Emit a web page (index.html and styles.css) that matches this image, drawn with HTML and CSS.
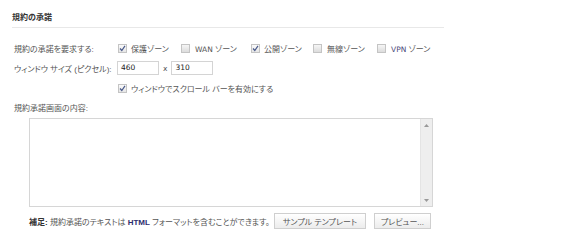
FILE: index.html
```html
<!DOCTYPE html>
<html lang="ja">
<head>
<meta charset="utf-8">
<link rel="stylesheet" href="styles.css">
</head>
<body>
<div class="section">
  <div class="title">規約の承諾</div>
  <div class="row r1">
    <div class="label">規約の承諾を要求する:</div>
    <div class="checks">
      <span class="item i1"><span class="cb on"><svg viewBox="0 0 9 9" width="9" height="9"><path d="M2 4.5 L3.8 6.5 L7 1.8" fill="none" stroke="#4a5a8a" stroke-width="1.2"/></svg></span><span class="txt">保護ゾーン</span></span>
      <span class="item i2"><span class="cb"></span><span class="txt"><span class="lat">WAN</span> ゾーン</span></span>
      <span class="item i3"><span class="cb on"><svg viewBox="0 0 9 9" width="9" height="9"><path d="M2 4.5 L3.8 6.5 L7 1.8" fill="none" stroke="#4a5a8a" stroke-width="1.2"/></svg></span><span class="txt">公開ゾーン</span></span>
      <span class="item i4"><span class="cb"></span><span class="txt">無線ゾーン</span></span>
      <span class="item i5"><span class="cb"></span><span class="txt"><span class="lat vpn">VPN</span> ゾーン</span></span>
    </div>
  </div>
  <div class="row r2">
    <div class="label">ウィンドウ サイズ (ピクセル):</div>
    <div class="size">
      <span class="inp lat">460</span>
      <span class="x lat">x</span>
      <span class="inp lat">310</span>
    </div>
  </div>
  <div class="row r3">
    <div class="label"></div>
    <span class="item"><span class="cb on"><svg viewBox="0 0 9 9" width="9" height="9"><path d="M2 4.5 L3.8 6.5 L7 1.8" fill="none" stroke="#4a5a8a" stroke-width="1.2"/></svg></span><span class="txt">ウィンドウでスクロール バーを有効にする</span></span>
  </div>
  <div class="row r4">
    <div class="label">規約承諾画面の内容:</div>
  </div>
  <div class="area">
    <div class="area-body"></div>
    <div class="scroll">
      <svg class="arr" viewBox="0 0 5 3" width="5" height="3"><path d="M0 3 L2.5 0 L5 3 Z" fill="#999"/></svg>
      <svg class="arr" viewBox="0 0 5 3" width="5" height="3"><path d="M0 0 L2.5 3 L5 0 Z" fill="#999"/></svg>
    </div>
  </div>
  <div class="foot">
    <span class="note"><b>補足:</b> 規約承諾のテキストは <span class="html">HTML</span> フォーマットを含むことができます。</span>
    <span class="btn b1">サンプル テンプレート</span>
    <span class="btn b2">プレビュー...</span>
  </div>
</div>
</body>
</html>
```
FILE: styles.css
```css
html, body {
  margin: 0;
  padding: 0;
  background: #fff;
}
body {
  font-family: "Liberation Sans", "Noto Sans CJK JP", sans-serif;
  font-size: 8px;
  font-feature-settings: "palt";
  color: #555;
  width: 576px;
  height: 248px;
  overflow: hidden;
}
.lat {
  font-family: "DejaVu Sans", "Noto Sans CJK JP", sans-serif;
  font-size: 7.5px;
}
.vpn {
  color: #4a4a7a;
}
.section {
  padding: 13px 0 0 12px;
  width: 432px;
}
.title {
  font-weight: bold;
  color: #333;
  padding-bottom: 4px;
  border-bottom: 1px solid #e8e8e8;
  line-height: 10px;
}
.row {
  display: flex;
  align-items: center;
  padding-left: 2px;
}
.r1 { margin-top: 14px; height: 12px; }
.r2 { margin-top: 7px; height: 14px; }
.r3 { margin-top: 7px; height: 12px; }
.r4 { margin-top: 7px; height: 12px; }
.label {
  width: 103px;
  flex: none;
  white-space: nowrap;
}
.checks {
  display: flex;
  align-items: center;
}
.item {
  display: inline-flex;
  align-items: center;
  white-space: nowrap;
  flex: none;
}
.i1 { width: 63px; }
.i2 { width: 70px; }
.i3 { width: 62px; }
.i4 { width: 64px; }
.cb {
  width: 7px;
  height: 7px;
  border: 1px solid #c4c4c4;
  background: linear-gradient(#f6f6f6, #dcdcdc);
  margin-left: 1px;
  margin-right: 4px;
  position: relative;
  flex: none;
}
.i2 .cb, .i4 .cb, .i5 .cb {
  margin-right: 5px;
}
.cb.on {
  background: linear-gradient(#fafafa, #e6e6e6);
}
.cb svg {
  position: absolute;
  left: -1px;
  top: -1px;
}
.size {
  display: flex;
  align-items: center;
}
.inp {
  width: 37px;
  height: 12px;
  border: 1px solid #d4d4d4;
  padding-left: 3px;
  line-height: 12px;
  color: #222;
}
.x {
  margin: 0 4px 0 4px;
}
.area {
  margin: 5px 0 0 17px;
  width: 402px;
  height: 87px;
  border: 1px solid #d6d6d6;
  display: flex;
}
.area-body {
  flex: 1;
}
.scroll {
  width: 11px;
  border-left: 1px solid #e4e4e4;
  background: #eeeeee;
  display: flex;
  flex-direction: column;
  justify-content: space-between;
  align-items: center;
  padding: 5px 0 4px;
}
.foot {
  display: flex;
  align-items: center;
  margin: 6px 0 0 17px;
  height: 16px;
  white-space: nowrap;
}
.note {
  width: 238px;
  flex: none;
}
.note b {
  color: #333;
}
.html {
  color: #2d2d6e;
  font-weight: bold;
}
.btn {
  display: inline-flex;
  align-items: center;
  justify-content: center;
  height: 14px;
  border: 1px solid #cfcfcf;
  background: linear-gradient(#ffffff, #ececec);
  color: #555;
  flex: none;
}
.b1 {
  margin-left: 7px;
  width: 90px;
}
.b2 {
  margin-left: 8px;
  width: 55px;
}
```
